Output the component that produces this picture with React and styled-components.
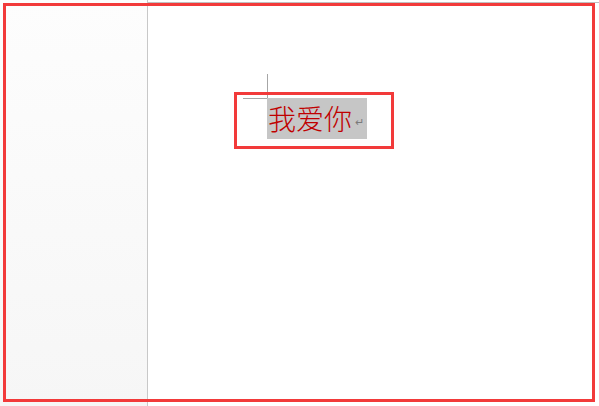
import React from 'react';
import styled, { createGlobalStyle } from 'styled-components';

const GlobalStyle = createGlobalStyle`
  html, body {
    margin: 0;
    padding: 0;
    background: #ffffff;
    font-family: "Noto Sans CJK SC", "Liberation Sans", sans-serif;
  }
`;

const Screen = styled.div`
  position: relative;
  width: 599px;
  height: 406px;
  display: flex;
  overflow: hidden;
  background: #ffffff;
`;

const Sidebar = styled.aside`
  width: 147px;
  flex-shrink: 0;
  border-right: 1px solid #c8c8c8;
  background: linear-gradient(to bottom, #fdfdfd, #f6f6f6);
`;

const Page = styled.main`
  flex: 1;
  padding-top: 2px;
  display: flex;
  flex-direction: column;
`;

const Sheet = styled.div`
  position: relative;
  flex: 1;
  border-top: 1px solid #c0c0c0;
  padding: 89px 0 0 86px;
`;

// 段落左上角的页边距标记，画在红框下面
const CornerMark = styled.div`
  position: absolute;
  left: 95px;
  top: 71px;
  width: 24px;
  height: 24px;
  border-right: 1px solid #a6a6a6;
  border-bottom: 1px solid #a6a6a6;
`;

const Highlight = styled.div`
  position: relative;
  box-sizing: border-box;
  width: 160px;
  border: 3px solid ${props => props.color};
  padding: 3px 0 7px 30px;
`;

const Selection = styled.div`
  display: flex;
  align-items: center;
  box-sizing: border-box;
  width: 100px;
  height: 41px;
  padding-left: 1px;
  background: #c6c6c6;
  color: #c00000;
  font-size: 28px;
  font-weight: 300;
  line-height: 41px;
  white-space: nowrap;
`;

const Word = styled.span`
  display: inline-block;
  width: 84px;
`;

const ReturnMark = styled.span`
  display: inline-block;
  margin: 8px 0 0 3px;
  color: #7a7a7a;
  font-family: "DejaVu Sans", sans-serif;
  font-size: 11px;
  line-height: 11px;
`;

const Frame = styled.div`
  position: absolute;
  left: 3px;
  top: 3px;
  width: 592px;
  height: 399px;
  box-sizing: border-box;
  border: 3px solid #f23a3a;
  pointer-events: none;
`;

const App = () => {
  return (
    <>
      <GlobalStyle />
      <Screen>
        <Sidebar />
        <Page>
          <Sheet>
            <CornerMark />
            <Highlight color="#f23a3a">
              <Selection>
                <Word>我爱你</Word>
                <ReturnMark>↵</ReturnMark>
              </Selection>
            </Highlight>
          </Sheet>
        </Page>
        <Frame />
      </Screen>
    </>
  );
};

export default App;
